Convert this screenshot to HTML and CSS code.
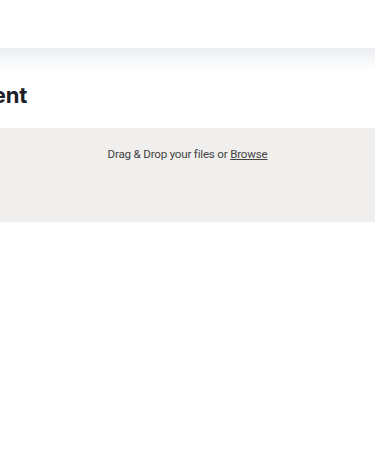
FILE: index.html
```html
<!DOCTYPE html>
<html>
<head>
<meta charset="utf-8">
<link rel="stylesheet" href="styles.css">
</head>
<body>
<header class="topbar"></header>
<div class="topbar-shadow"></div>
<div class="title-row">
  <h1 class="title">Upload Document</h1>
</div>
<section class="dropzone">
  <p class="drop-text">Drag &amp; Drop your files or <a class="browse" href="#">Browse</a></p>
</section>
</body>
</html>
```
FILE: styles.css
```css
html, body {
  margin: 0;
  padding: 0;
  background: #ffffff;
  font-family: Inter, "Noto Sans", sans-serif;
  overflow: hidden;
}
.topbar {
  height: 48px;
  background: #ffffff;
}
.topbar-shadow {
  height: 24px;
  background: linear-gradient(to bottom, #eceef1 0%, #f7f8f9 50%, #ffffff 100%);
}
.title-row {
  width: 27px;
  height: 56px;
  padding-bottom: 10px;
  box-sizing: border-box;
  display: flex;
  justify-content: flex-end;
  align-items: center;
  white-space: nowrap;
}
.title {
  margin: 0;
  font-size: 22px;
  font-weight: 700;
  color: #1b2029;
  letter-spacing: -0.2px;
}
.dropzone {
  background: #f0efed;
  height: 94px;
  padding-top: 18px;
  box-sizing: border-box;
}
.drop-text {
  margin: 0;
  text-align: center;
  font-family: Roboto, "Liberation Sans", sans-serif;
  font-size: 11.6px;
  letter-spacing: -0.2px;
  line-height: 16px;
  color: #434343;
}
.browse {
  color: #434343;
  text-decoration: underline;
}
```
